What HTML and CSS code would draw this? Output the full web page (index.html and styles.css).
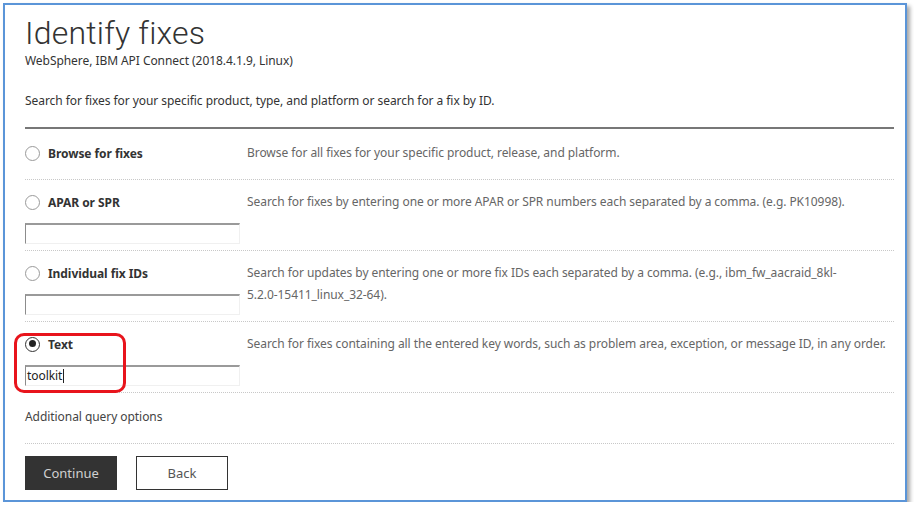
FILE: index.html
```html
<!DOCTYPE html>
<html lang="en">
<head>
<meta charset="utf-8">
<title>Identify fixes</title>
<link rel="stylesheet" href="styles.css">
</head>
<body>
<div class="frame">
  <h1 class="title">Identify fixes</h1>
  <p class="subtitle">WebSphere, IBM API Connect (2018.4.1.9, Linux)</p>
  <p class="intro">Search for fixes for your specific product, type, and platform or search for a fix by ID.</p>

  <div class="options">
    <div class="row row-first">
      <div class="left">
        <label class="radio"><span class="dot"></span>Browse for fixes</label>
      </div>
      <div class="desc">Browse for all fixes for your specific product, release, and platform.</div>
    </div>
    <div class="row">
      <div class="left">
        <label class="radio"><span class="dot"></span>APAR or SPR</label>
        <div class="field"></div>
      </div>
      <div class="desc">Search for fixes by entering one or more APAR or SPR numbers each separated by a comma. (e.g. PK10998).</div>
    </div>
    <div class="row">
      <div class="left">
        <label class="radio"><span class="dot"></span>Individual fix IDs</label>
        <div class="field"></div>
      </div>
      <div class="desc">Search for updates by entering one or more fix IDs each separated by a comma. (e.g., ibm_fw_aacraid_8kl-<br>5.2.0-15411_linux_32-64).</div>
    </div>
    <div class="row row-selected">
      <div class="left">
        <label class="radio"><span class="dot checked"></span>Text</label>
        <div class="field">toolkit<span class="caret"></span></div>
      </div>
      <div class="desc">Search for fixes containing all the entered key words, such as problem area, exception, or message ID, in any order.</div>
      <div class="highlight"></div>
    </div>
  </div>

  <div class="additional">Additional query options</div>

  <div class="actions">
    <button class="btn btn-primary">Continue</button>
    <button class="btn btn-secondary">Back</button>
  </div>
</div>
</body>
</html>
```

FILE: styles.css
```css
* { box-sizing: border-box; }

html, body {
  margin: 0;
  padding: 0;
  background: #ffffff;
}

body {
  font-family: "Noto Sans", Roboto, "Liberation Sans", sans-serif;
  color: #333;
  font-size: 12px;
  letter-spacing: -0.06px;
}

.frame {
  margin: 3px 0 0 3px;
  width: 904px;
  height: 499px;
  border: 2px solid #5b95d8;
  box-shadow: 3px 3px 4px rgba(0, 0, 0, 0.35);
  background: #fff;
  padding: 10px 11px 0 20px;
}

.title {
  margin: 0;
  font-family: Roboto, "Noto Sans", sans-serif;
  font-size: 32px;
  line-height: 36px;
  font-weight: 300;
  letter-spacing: 0.2px;
  color: #333;
}

.subtitle {
  margin: 2px 0 0;
  line-height: 16px;
  font-size: 12px;
  color: #333;
}

.intro {
  margin: 24px 0 0;
  line-height: 16px;
  font-size: 12px;
  color: #333;
}

.options {
  margin-top: 18px;
  border-top: 2px solid #777;
}

.row {
  position: relative;
  display: grid;
  grid-template-columns: 222px 1fr;
  padding: 11px 0 6px;
  border-bottom: 1px dotted #c8c8c8;
}

.row-first {
  padding-top: 13px;
  padding-bottom: 15px;
}

.radio {
  display: flex;
  align-items: center;
  gap: 8px;
  height: 22px;
  font-weight: 700;
  color: #333;
}

.dot {
  width: 15px;
  height: 15px;
  border: 1px solid #9a9a9a;
  border-radius: 50%;
  display: inline-block;
  position: relative;
  flex: none;
}

.dot.checked {
  border: 1.5px solid #333;
}

.dot.checked::after {
  content: "";
  position: absolute;
  left: 2.5px;
  top: 2.5px;
  width: 7px;
  height: 7px;
  border-radius: 50%;
  background: #222;
}

.field {
  margin-top: 10px;
  width: 215px;
  height: 21px;
  border-top: 2px solid #9a9a9a;
  border-left: 1px solid #8c8c8c;
  border-right: 1px solid #f0f0f0;
  border-bottom: 1px solid #f0f0f0;
  padding: 1px 1px 0;
  line-height: 16px;
  font-size: 12px;
  color: #222;
}

.caret {
  display: inline-block;
  width: 1px;
  height: 14px;
  background: #222;
  vertical-align: -3px;
  margin-left: 1px;
}

.desc {
  line-height: 22px;
  color: #666;
}

.highlight {
  position: absolute;
  left: -11px;
  top: 11px;
  width: 112px;
  height: 60px;
  border: 3px solid #e8141c;
  border-radius: 10px;
  pointer-events: none;
}

.additional {
  padding: 13px 0 15px;
  line-height: 22px;
  color: #444;
  border-bottom: 1px dotted #c8c8c8;
}

.actions {
  display: flex;
  gap: 19px;
  margin-top: 12px;
}

.btn {
  width: 92px;
  height: 34px;
  font-family: inherit;
  font-size: 13px;
  cursor: pointer;
}

.btn-primary {
  background: #333;
  color: #d0d0d0;
  border: 1px solid #333;
}

.btn-secondary {
  background: #fff;
  color: #555;
  border: 1px solid #333;
}
```
